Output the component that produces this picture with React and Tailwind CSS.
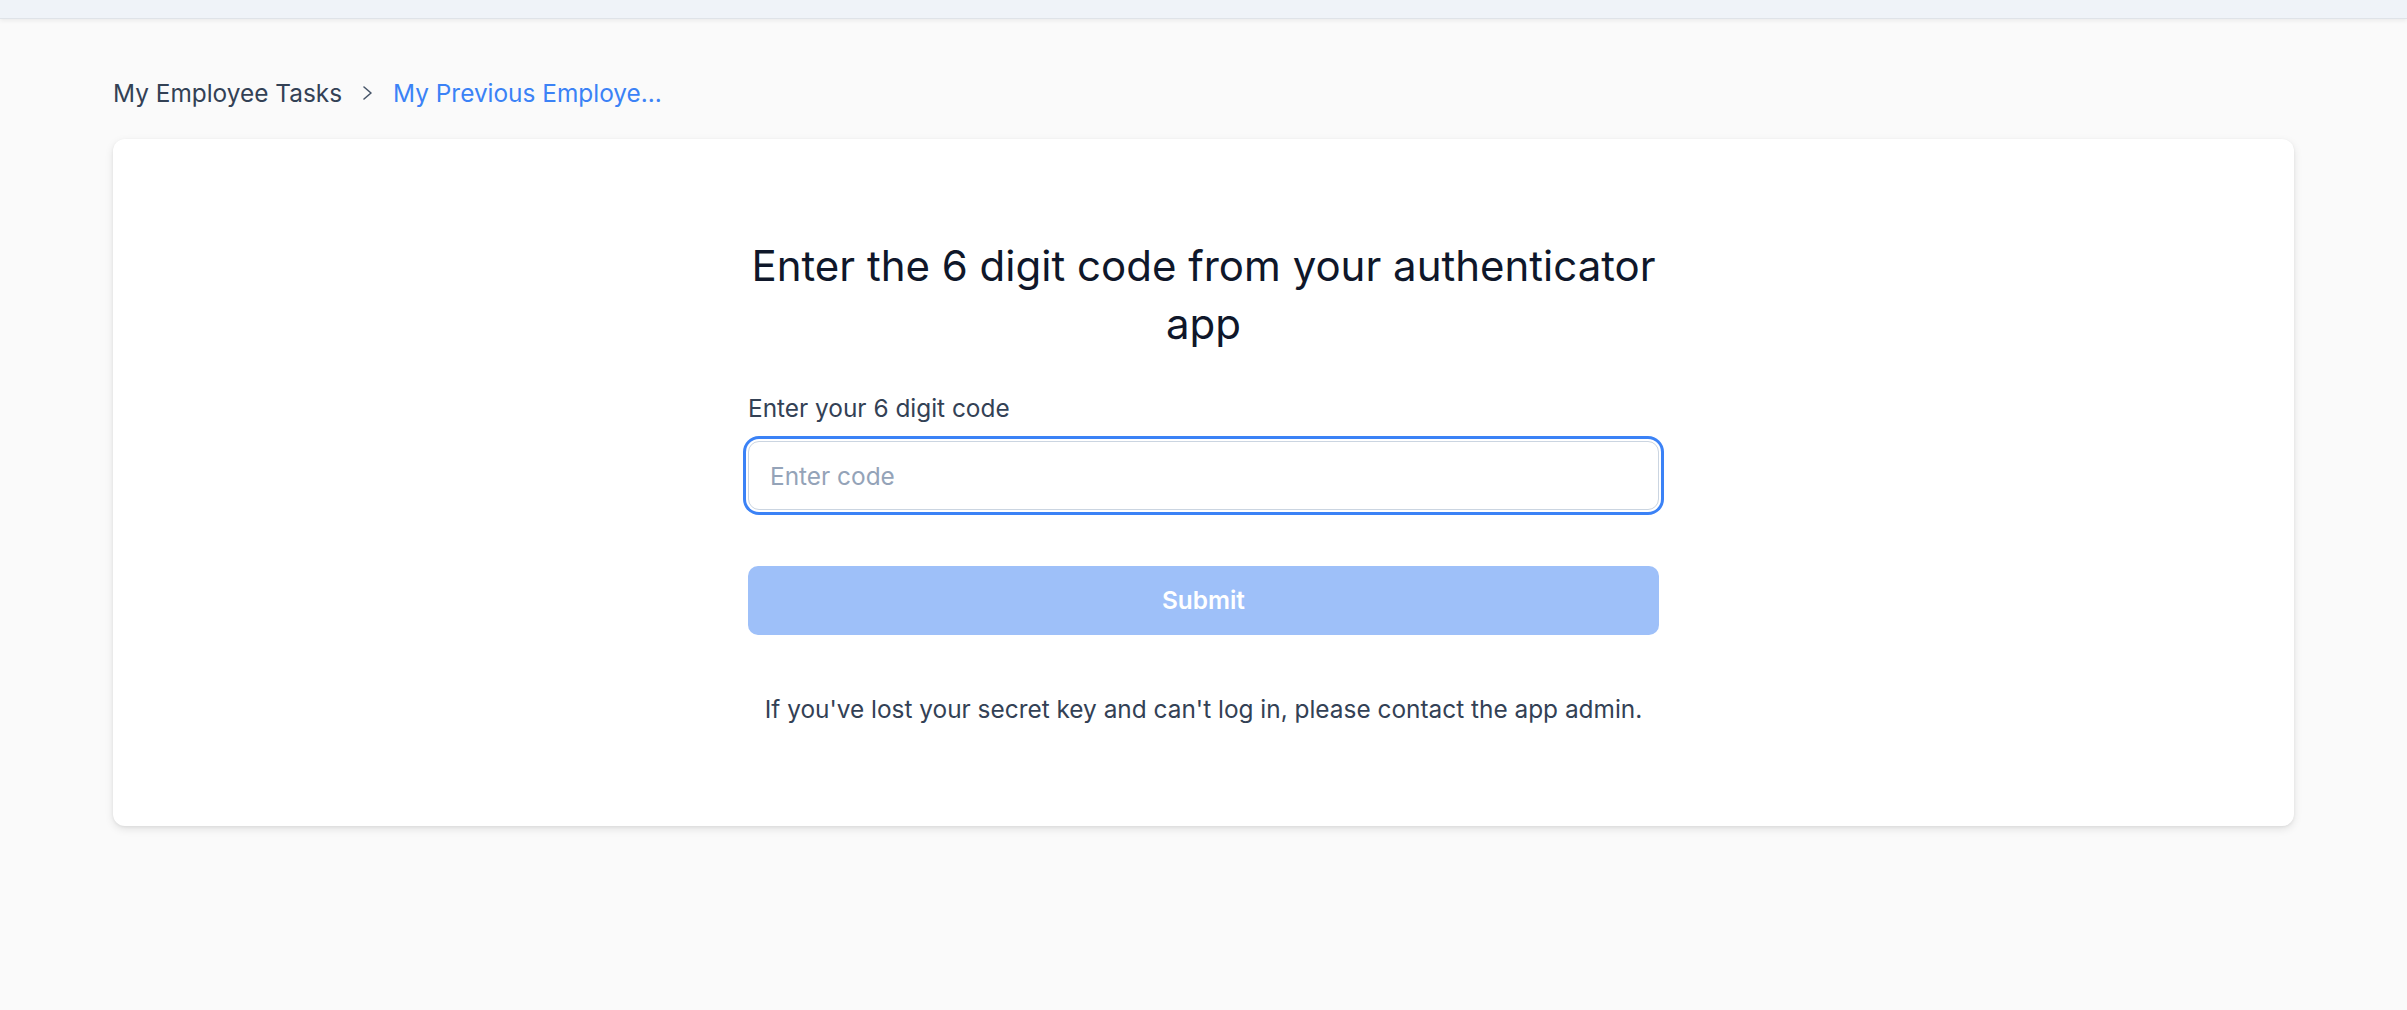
import React from "react";

export default function App() {
  return (
    <div className="min-h-[1010px] w-full bg-[#fafafa]" style={{ fontFamily: "Inter, 'Noto Sans', sans-serif" }}>
      <div className="h-[19px] w-full bg-[#eff3f8] border-b border-[#dfe3e8] shadow-[0_2px_4px_rgba(0,0,0,0.06)]" />
      <div className="px-[113px] pt-[56px]">
        <nav className="flex items-center h-[36px] text-[24.4px] leading-[36px]">
          <span className="text-[#334155]">My Employee Tasks</span>
          <svg className="ml-[19px] mr-[18px] text-[#475569]" width="14" height="20" viewBox="0 0 14 20" fill="none" stroke="currentColor" strokeWidth="1.6" strokeLinecap="round" strokeLinejoin="round">
            <path d="M3 4l7 6-7 6" />
          </svg>
          <span className="text-[#3b82f6]">My Previous Employe...</span>
        </nav>
        <div className="mt-[28px] bg-white rounded-[12px] shadow-[0_3px_8px_rgba(0,0,0,0.10),0_1px_3px_rgba(0,0,0,0.06)] pt-[98px] pb-[99px]">
          <div className="mx-auto w-[911px] flex flex-col">
            <h1 className="text-center text-[42px] leading-[58px] text-[#0f172a] font-normal">
              Enter the 6 digit code from your authenticator app
            </h1>
            <label className="mt-[37px] text-[24.4px] leading-[36px] text-[#334155]">Enter your 6 digit code</label>
            <input
              autoFocus
              type="text"
              placeholder="Enter code"
              className="mt-[15px] h-[69px] w-full rounded-[11px] border border-[#cbd5e1] bg-white px-[21px] text-[24.4px] text-[#0f172a] placeholder:text-[#94a3b8] outline-none ring-[3px] ring-[#3b82f6] ring-offset-2 ring-offset-white"
            />
            <button className="mt-[56px] h-[69px] w-full rounded-[10px] bg-[#9ec0f9] text-white text-[24.4px] font-semibold">
              Submit
            </button>
            <p className="mt-[56px] text-center text-[24.4px] leading-[36px] text-[#334155]">
              If you've lost your secret key and can't log in, please contact the app admin.
            </p>
          </div>
        </div>
      </div>
    </div>
  );
}
